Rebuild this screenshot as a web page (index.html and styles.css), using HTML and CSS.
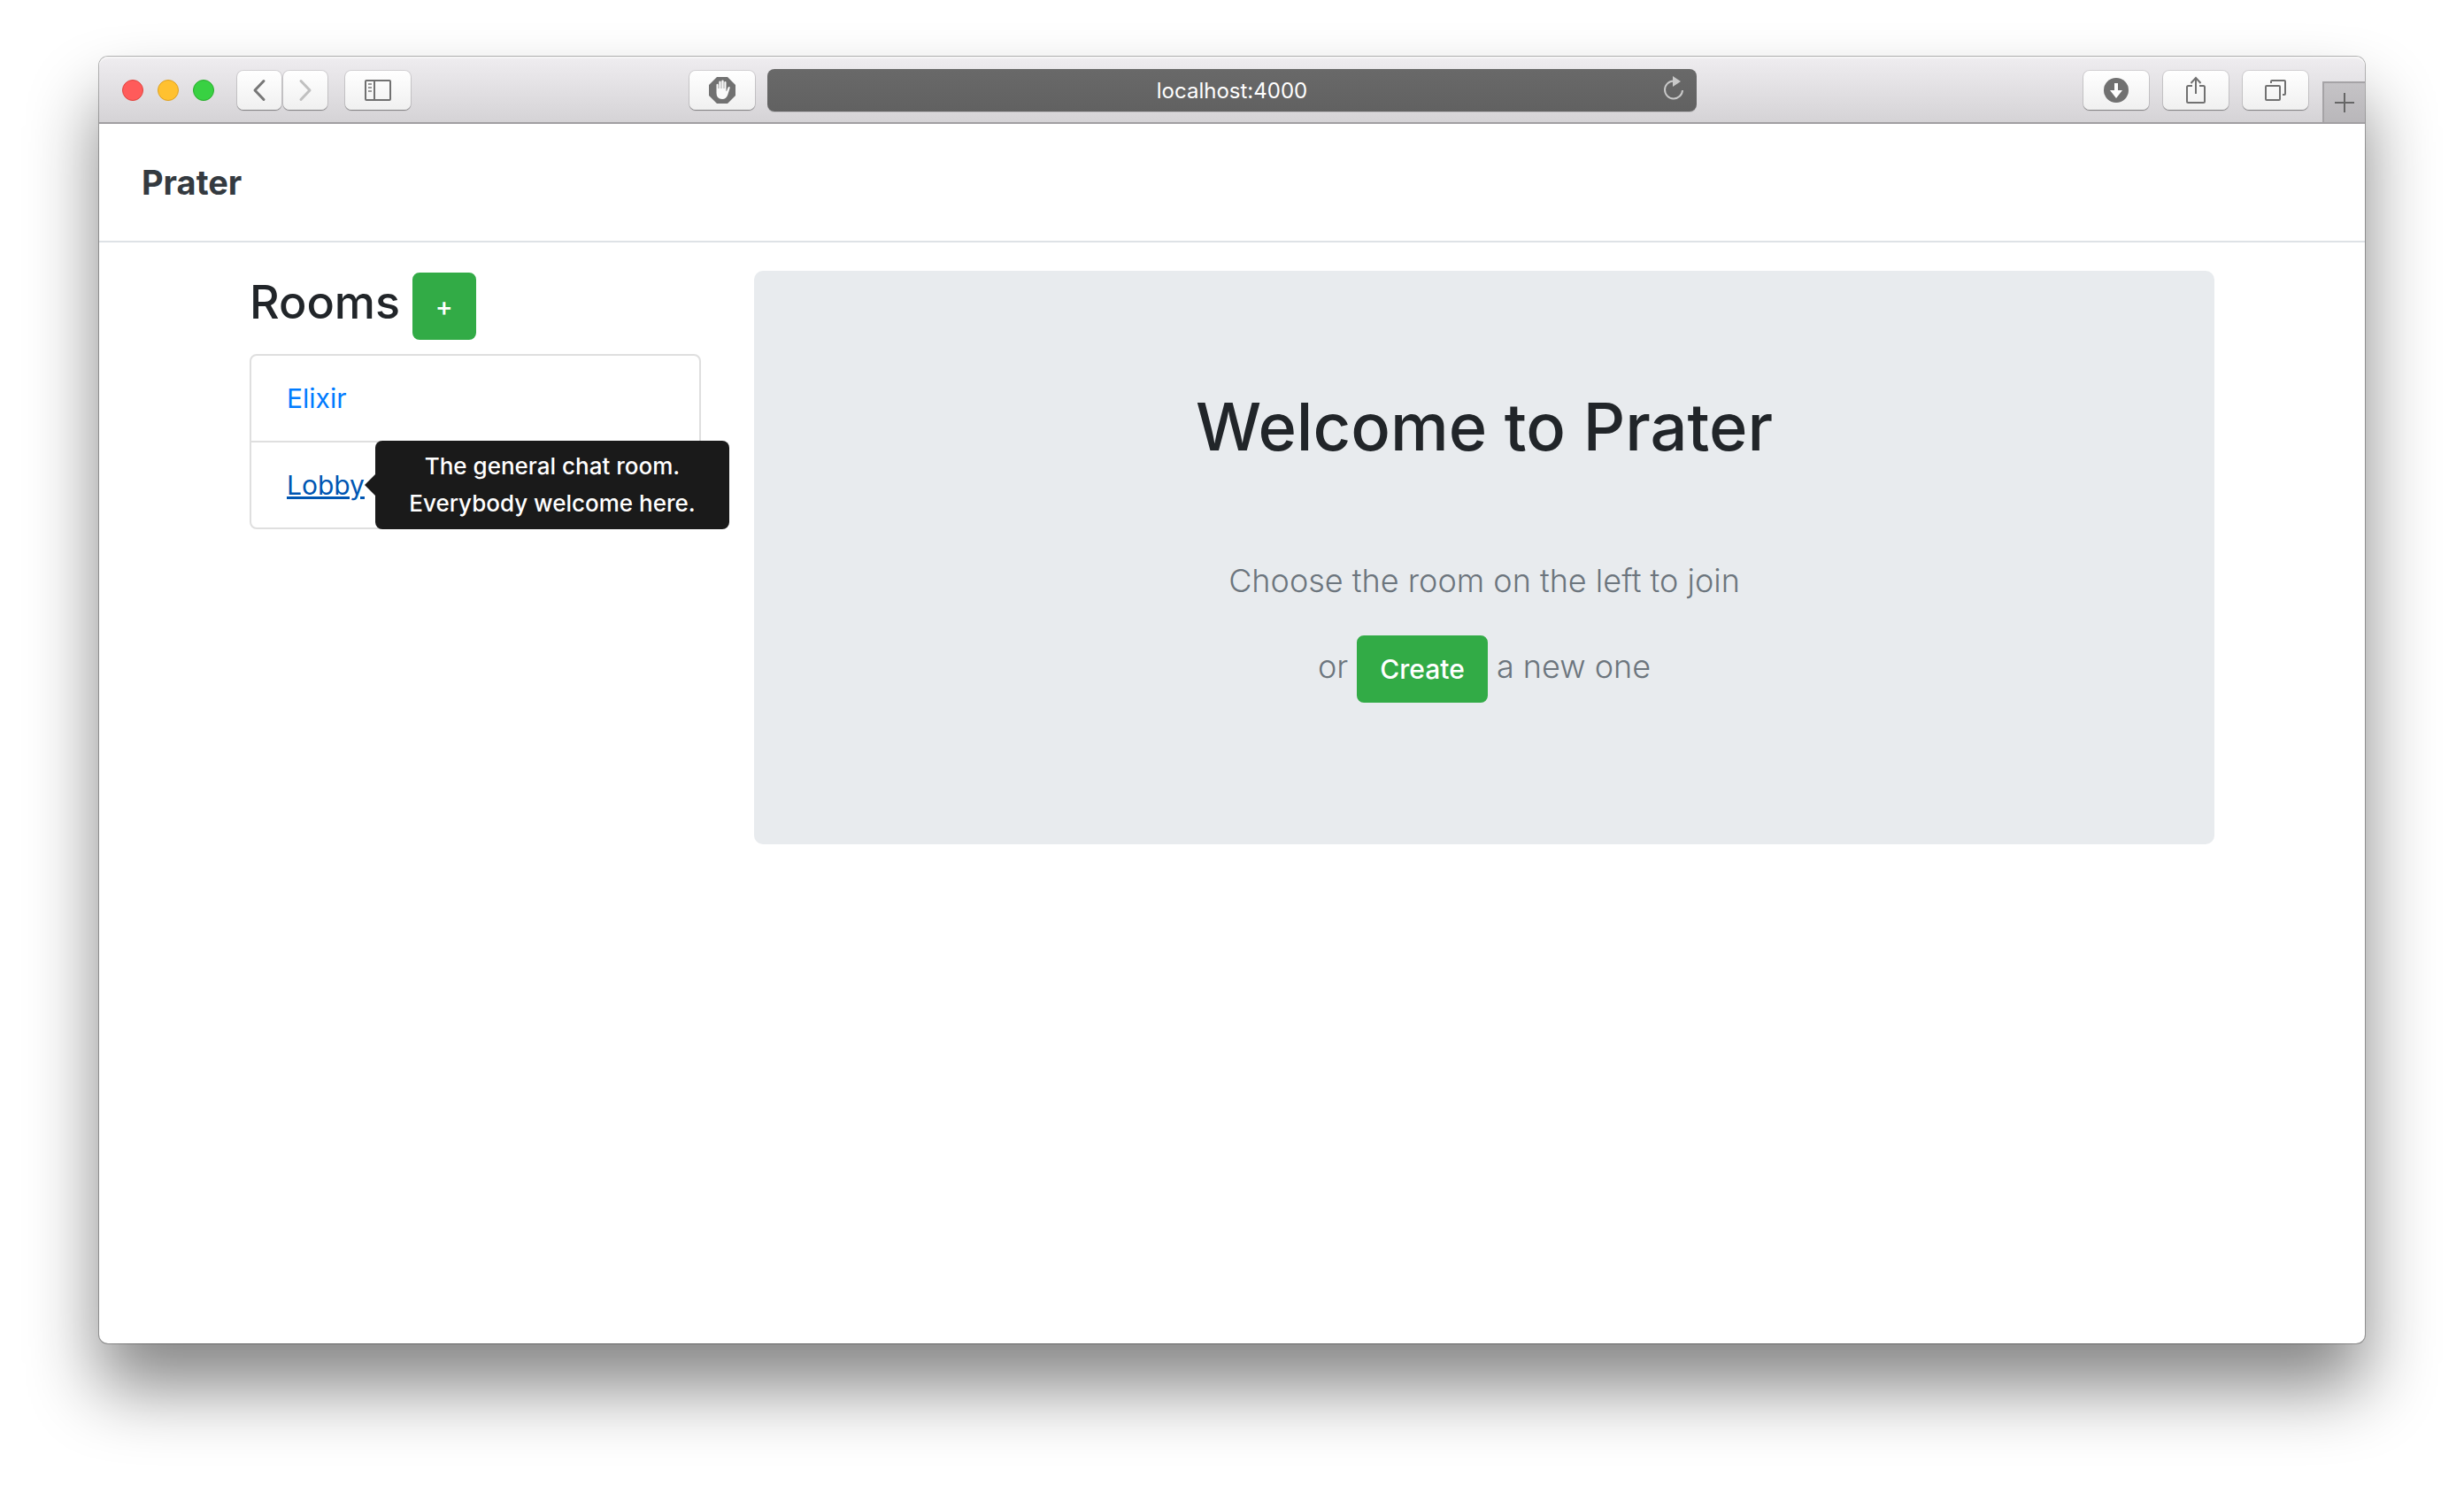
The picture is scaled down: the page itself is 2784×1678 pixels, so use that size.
FILE: index.html
```html
<!DOCTYPE html>
<html lang="en">
<head>
<meta charset="utf-8">
<title>Prater</title>
<link rel="stylesheet" href="styles.css">
</head>
<body>
<div class="window">
  <div class="toolbar">
    <div class="toolbar-side">
      <div class="lights">
        <button class="light light-close" aria-label="Close"></button>
        <button class="light light-minimize" aria-label="Minimize"></button>
        <button class="light light-zoom" aria-label="Zoom"></button>
      </div>
      <div class="history">
        <button class="tool tool-narrow" aria-label="Back"><svg width="16" height="26" viewBox="0 0 16 26"><path d="M13 2.500L3 13l10 10.500" fill="none" stroke="#777" stroke-width="3" stroke-linecap="round" stroke-linejoin="round"/></svg></button>
        <button class="tool tool-narrow" aria-label="Forward"><svg width="16" height="26" viewBox="0 0 16 26"><path d="M3 2.500L13 13L3 23.500" fill="none" stroke="#c0c0c0" stroke-width="3" stroke-linecap="round" stroke-linejoin="round"/></svg></button>
      </div>
      <button class="tool" aria-label="Show sidebar"><svg width="30" height="24" viewBox="0 0 30 24"><rect x="1" y="1" width="28" height="22" rx="1" fill="none" stroke="#707070" stroke-width="2"/><path d="M11 1v22" stroke="#707070" stroke-width="2"/><path d="M4 5h4M4 9h4M4 13h4" stroke="#999" stroke-width="2"/></svg></button>
      <button class="tool tool-blocker" aria-label="Content blocker"><svg width="30" height="30" viewBox="0 0 30 30"><path d="M9 0h12l9 9v12l-9 9H9l-9-9V9z" fill="#717171"/><path d="M8.500 9q0-1.300 1-1.300t1.100 1.300V13h.7V6q0-1.400 1.200-1.400T13.700 6v7h.6V5q0-1.400 1.200-1.400T16.700 5v8h.6V6.200q0-1.300 1.100-1.300t1.100 1.300V16h.5l1.500-4q.6-1.300 1.600-1t.4 1.900l-2.200 7q-1.600 5-6.300 5-6.500 0-6.500-7z" fill="#fafafa"/></svg></button>
    </div>
    <form class="address">
      <input class="address-input" type="text" aria-label="Address" value="localhost:4000">
      <button class="reload" type="button" aria-label="Reload"><svg width="24" height="28" viewBox="0 0 24 28"><path d="M12 5.500A10 10 0 1 0 22 16" fill="none" stroke="#c9c9c9" stroke-width="2"/><path d="M11 0l9 6-9 6z" fill="#c9c9c9"/></svg></button>
    </form>
    <div class="toolbar-side toolbar-end">
      <button class="tool" aria-label="Downloads"><svg width="28" height="28" viewBox="0 0 28 28"><circle cx="14" cy="14" r="14" fill="#717171"/><path d="M12 6h4v8h5l-7 9-7-9h5z" fill="#fff"/></svg></button>
      <button class="tool" aria-label="Share"><svg width="24" height="32" viewBox="0 0 24 32"><path d="M8 11H3.500a1.500 1.500 0 0 0-1.500 1.500v16A1.500 1.500 0 0 0 3.500 30h17a1.500 1.500 0 0 0 1.500-1.500v-16a1.500 1.500 0 0 0-1.500-1.500H16M12 20V2M6.500 8L12 2l5.500 6" fill="none" stroke="#717171" stroke-width="2"/></svg></button>
      <button class="tool" aria-label="Show all tabs"><svg width="24" height="24" viewBox="0 0 24 24"><rect x="1" y="7" width="16" height="16" rx="1" fill="none" stroke="#717171" stroke-width="2"/><path d="M7 4V2a1 1 0 0 1 1-1h14a1 1 0 0 1 1 1v14a1 1 0 0 1-1 1h-2" fill="none" stroke="#717171" stroke-width="2"/></svg></button>
      <button class="new-tab" aria-label="New tab"><svg width="22" height="22" viewBox="0 0 22 22"><path d="M11 0v22M0 11h22" stroke="#666" stroke-width="2"/></svg></button>
    </div>
  </div>
  <header class="navbar"><a class="brand" href="#">Prater</a></header>
  <main class="container">
    <aside class="sidebar">
      <h2 class="sidebar-title">Rooms <button class="btn">+</button></h2>
      <ul class="rooms">
        <li class="room"><a class="room-link" href="#">Elixir</a></li>
        <li class="room"><a class="room-link room-link-hover" href="#" aria-describedby="lobby-tip">Lobby<span class="tooltip" id="lobby-tip" role="tooltip">The general chat room. Everybody welcome here.</span></a></li>
      </ul>
    </aside>
    <section class="jumbotron">
      <h1 class="welcome">Welcome to Prater</h1>
      <p class="lead">Choose the room on the left to join</p>
      <p class="lead">or <button class="btn">Create</button> a new one</p>
    </section>
  </main>
</div>
</body>
</html>
```
FILE: styles.css
```css
* { box-sizing: border-box; }

body {
  margin: 0;
  padding: 64px 112px 160px;
  min-height: 100vh;
  display: flex;
  background: #fff;
  color: #212529;
  font: 400 30px/48px Inter, "Liberation Sans", sans-serif;
}

button, input { font: inherit; }
svg { display: block; }

.window {
  flex: 1;
  min-width: 0;
  display: flex;
  flex-direction: column;
  border-radius: 10px;
  background: #fff;
  box-shadow: 0 0 0 1px rgba(0, 0, 0, .28), 0 50px 80px rgba(0, 0, 0, .48);
}

/* Browser toolbar */
.toolbar {
  display: grid;
  grid-template-columns: 1fr 41% 1fr;
  column-gap: 14px;
  align-items: center;
  height: 76px;
  padding-top: 2px;
  border-bottom: 2px solid #a19fa2;
  border-radius: 10px 10px 0 0;
  background: linear-gradient(#efedf0, #d5d3d6);
  box-shadow: inset 0 2px 0 #f6f5f6;
}

.toolbar-side { display: flex; align-items: center; height: 100%; }
.toolbar-end { justify-content: flex-end; gap: 16px; }

.lights { display: flex; gap: 16px; margin: 0 26px; }
.light {
  width: 24px;
  height: 24px;
  padding: 0;
  border: 1px solid;
  border-radius: 50%;
}
.light-close { background: #ff5b5a; border-color: #e0443e; }
.light-minimize { background: #ffc130; border-color: #dea123; }
.light-zoom { background: #38d142; border-color: #2aac2d; }

.history { display: flex; gap: 2px; margin-right: 20px; }

.tool {
  display: flex;
  align-items: center;
  justify-content: center;
  width: 74px;
  height: 44px;
  padding: 0;
  border: 0;
  border-radius: 7px;
  background: linear-gradient(#fff, #f0f0f0);
  box-shadow: 0 0 0 1px rgba(0, 0, 0, .1), 0 1px 1px rgba(0, 0, 0, .35);
}
.tool-narrow { width: 50px; }
.tool-blocker { margin-left: auto; }

.address {
  position: relative;
  display: flex;
  height: 48px;
}
.address-input {
  width: 100%;
  padding: 2px 40px 0;
  border: 0;
  border-radius: 8px;
  background: linear-gradient(#696969, #616161);
  box-shadow: 0 1px 0 #bdbbbe;
  color: #fff;
  font-size: 24px;
  text-align: center;
}
.reload {
  position: absolute;
  top: 8px;
  right: 14px;
  padding: 0;
  border: 0;
  background: none;
}

.new-tab {
  display: flex;
  align-items: center;
  justify-content: center;
  align-self: flex-end;
  width: 48px;
  height: 46px;
  padding: 0;
  border: 0 solid #a5a3a6;
  border-width: 2px 0 0 2px;
  background: linear-gradient(#c5c3c6, #b9b7ba);
}

/* Page */
.navbar {
  padding: 36px 48px;
  border-bottom: 2px solid #dee2e6;
}
.brand {
  color: #343a40;
  font-size: 38px;
  font-weight: 700;
  line-height: 60px;
  text-decoration: none;
}

.container {
  display: grid;
  grid-template-columns: 510fr 1650fr;
  column-gap: 60px;
  align-items: start;
  width: 100%;
  max-width: 2280px;
  margin: 0 auto;
  padding: 32px 30px;
}

.sidebar-title {
  margin: 2px 0 16px;
  font-size: 52px;
  font-weight: 500;
  line-height: 66px;
}

.btn {
  padding: 12px 24px;
  border: 2px solid #32ab46;
  border-radius: 8px;
  background: #32ab46;
  color: #fff;
  font-size: 30px;
  font-weight: 500;
  line-height: 48px;
  vertical-align: middle;
}

.rooms {
  margin: 0;
  padding: 0;
  border: 2px solid #dfdfdf;
  border-radius: 8px;
  list-style: none;
}
.room { padding: 24px 40px; }
.room + .room { border-top: 2px solid #dfdfdf; }
.room-link {
  position: relative;
  color: #007bff;
  text-decoration: none;
}
.room-link-hover { color: #0056b3; text-decoration: underline; }

.tooltip {
  position: absolute;
  top: 50%;
  left: 100%;
  width: 400px;
  margin-left: 12px;
  padding: 8px 16px;
  border-radius: 8px;
  background: #1a1a1a;
  color: #fff;
  font-size: 26px;
  font-weight: 500;
  line-height: 42px;
  text-align: center;
  transform: translateY(-50%);
}
.tooltip::before {
  content: "";
  position: absolute;
  top: 50%;
  right: 100%;
  border: 12px solid transparent;
  border-left-width: 0;
  border-right-color: #1a1a1a;
  transform: translateY(-50%);
}

.jumbotron {
  padding: 128px 64px;
  border-radius: 10px;
  background: #e8ebee;
  text-align: center;
}
.welcome {
  margin: 0 0 96px;
  font-size: 74px;
  font-weight: 500;
  line-height: 96px;
}
.lead {
  margin: 0 0 32px;
  color: #6c757d;
  font-size: 36px;
  font-weight: 300;
  line-height: 60px;
}
```
